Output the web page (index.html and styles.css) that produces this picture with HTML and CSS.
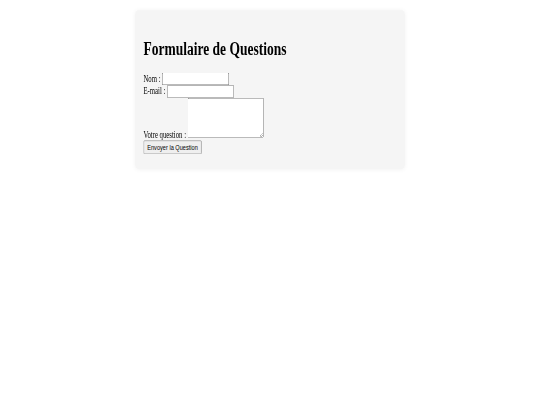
FILE: index.html
```html
<!DOCTYPE html>
<html lang="fr">
<head>
<meta charset="utf-8">
<title>Formulaire de Questions</title>
<link rel="stylesheet" href="styles.css">
</head>
<body>
<div class="viewport">
  <div class="container">
    <h1 class="title">Formulaire de Questions</h1>
    <form class="form">
      <label class="label" for="nom">Nom :</label>
      <input class="field" type="text" id="nom" name="nom"><br>
      <label class="label" for="email">E-mail :</label>
      <input class="field" type="email" id="email" name="email"><br>
      <label class="label" for="question">Votre question :</label>
      <textarea class="area" id="question" name="question"></textarea><br>
      <button class="submit" type="submit">Envoyer la Question</button>
    </form>
  </div>
</div>
</body>
</html>
```
FILE: styles.css
```css
html, body {
  margin: 0;
  padding: 0;
  background: #ffffff;
  overflow: hidden;
  width: 540px;
  height: 405px;
}

.viewport {
  display: flow-root;
  width: 1280px;
  height: 675px;
  transform: scale(0.421875, 0.6);
  transform-origin: 0 0;
  font-family: "Liberation Serif", "Times New Roman", serif;
  font-size: 16px;
  color: #000000;
}

.container {
  max-width: 600px;
  margin: 17px auto;
  padding: 24px 20px 25px;
  background: #f5f5f5;
  border-radius: 8px;
  box-shadow: 0 0 8px rgba(0, 0, 0, 0.05);
}

.title {
  font-size: 32px;
  font-weight: bold;
  margin: 21.44px 0;
}

.form {
  margin: 0;
}

.field {
  font-family: "Liberation Sans", Arial, sans-serif;
  font-size: 13.33px;
  width: 159px;
  box-sizing: border-box;
}

.area {
  font-family: "Liberation Mono", monospace;
  font-size: 13.33px;
  width: 180px;
  height: 67px;
  box-sizing: border-box;
  vertical-align: baseline;
}

.submit {
  font-family: "Liberation Sans", Arial, sans-serif;
  font-size: 13.33px;
  padding: 2px 7px;
}
```
